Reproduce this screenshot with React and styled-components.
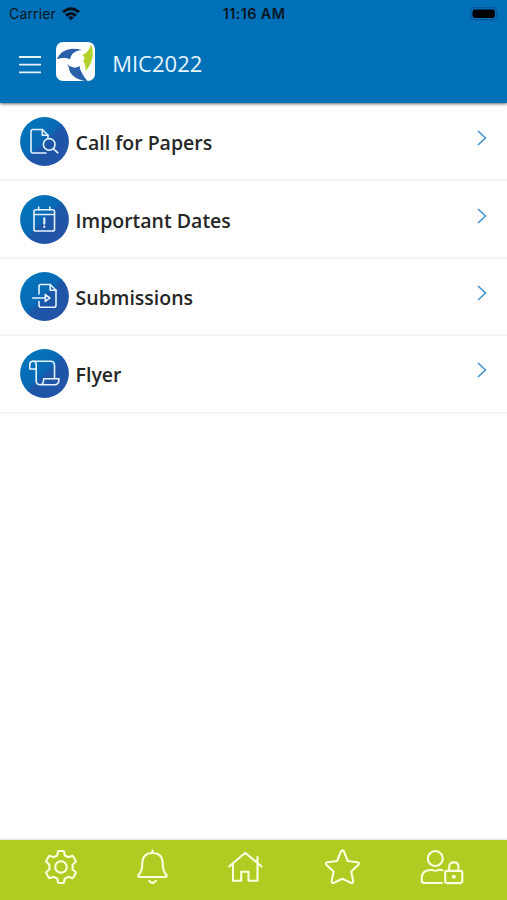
import React from 'react';
import styled, { createGlobalStyle } from 'styled-components';

const MENU = [
  { id: 'papers', label: 'Call for Papers' },
  { id: 'dates', label: 'Important Dates' },
  { id: 'submissions', label: 'Submissions' },
  { id: 'flyer', label: 'Flyer' },
];

const MENU_ICONS = {
  papers: (
    <>
      <path d="M26 36H13Q11 36 11 34V14.5Q11 12.5 13 12.5H22.3L28 18.2V20.5" />
      <path d="M22.3 12.5V18.2H28" />
      <circle cx="29.2" cy="27.4" r="5.8" />
      <path d="M33.4 31.6L37.8 35.8" />
    </>
  ),
  dates: (
    <>
      <rect x="14" y="14.8" width="20.5" height="21.2" rx="1.8" />
      <path d="M14 19.5H34.5M18.7 12V15M29.8 12V15" />
      <path d="M24.3 23.3V28.8M24.3 31.6V32" strokeWidth="2.1" />
    </>
  ),
  submissions: (
    <>
      <path d="M19 22V14.5Q19 12.5 21 12.5H30.2L36 18.3V33.2Q36 35.2 34 35.2H21Q19 35.2 19 33.2V29.5" />
      <path d="M30.2 12.5V18.3H36" />
      <path d="M12.7 26H25M25.3 22.6V29.4L29.8 26Z" />
    </>
  ),
  flyer: (
    <>
      <path d="M16.2 20H9.8V15.5Q9.8 12.2 13 12.2H30.5Q34.5 12.2 34.5 16.2V29.3" />
      <path d="M13 12.2Q16.2 12.2 16.2 16V31.5Q16.2 35.8 20.2 35.8H34.5Q39 35.8 39 29.8H23.7Q23.7 35.8 20.2 35.8" />
    </>
  ),
};

const App = () => {
  return (
    <Wrapper>
      <GlobalStyle />
      <Header>
        <StatusBar>
          <Carrier>
            Carrier
            <svg width="18" height="14" viewBox="0 0 18 14" fill="none" stroke="#04101a" strokeWidth="2.9">
              <path d="M1 5.2Q9-1.8 17 5.2" />
              <path d="M4 8.6Q9 4.2 14 8.6" />
              <path d="M9 13.2L6 10.3Q9 8.1 12 10.3Z" fill="#04101a" stroke="none" />
            </svg>
          </Carrier>
          <Time>11:16 AM</Time>
          <Battery>
            <svg width="30" height="14" viewBox="0 0 30 14">
              <rect x=".7" y=".7" width="26" height="12" rx="4" fill="none" stroke="#07559a" strokeWidth="1.2" />
              <rect x="2.5" y="2.5" width="22.5" height="8.5" rx="2.4" fill="#000" />
              <path d="M28 5Q29.5 6.7 28 8.5Z" fill="#07559a" />
            </svg>
          </Battery>
        </StatusBar>
        <TitleBar>
          <MenuBtn aria-label="Menu">
            <svg width="22" height="18" viewBox="0 0 22 18" stroke="#e5f3fb" strokeWidth="1.8">
              <path d="M0 1H22M0 8.7H22M0 16.4H22" />
            </svg>
          </MenuBtn>
          <Logo>
            <svg width="39" height="39" viewBox="18 18 117 117">
              <path d="M20 70Q34 40 66 38Q82 38 96 42Q76 45 69 52Q62 59 60 70Q44 60 20 70Z" fill="#2a5fa9" />
              <path d="M123 25Q132 48 126 70Q120 92 106 105Q109 86 99 74Q106 69 101 60Q98 58 95 57Q117 52 123 25Z" fill="#b2d12c" />
              <path d="M45 79Q57 94 75 95Q84 94 89 90Q89 100 98 115Q104 127 113 135Q86 134 69 119Q57 107 57 95Q53 86 45 79Z" fill="#2a5fa9" />
            </svg>
          </Logo>
          <Title>MIC2022</Title>
        </TitleBar>
      </Header>
      <List>
        {MENU.map((el) => (
          <Row key={el.id}>
            <svg width="49" height="49" viewBox="0 0 49 49">
              <defs>
                <linearGradient id={`bg-${el.id}`} x1="0.15" y1="0.15" x2="0.85" y2="0.85">
                  <stop offset="0" stopColor="#0074bb" />
                  <stop offset="0.46" stopColor="#0a69b5" />
                  <stop offset="0.55" stopColor="#1d56a8" />
                  <stop offset="1" stopColor="#2253a6" />
                </linearGradient>
              </defs>
              <circle cx="24.5" cy="24.5" r="24.4" fill={`url(#bg-${el.id})`} />
              <g fill="none" stroke="#e4f4ff" strokeWidth="1.6" strokeLinecap="round" strokeLinejoin="round">
                {MENU_ICONS[el.id]}
              </g>
            </svg>
            <Label>{el.label}</Label>
            <Chevron width="10" height="16" viewBox="0 0 10 16">
              <path d="M1 1L8.5 8L1 15" />
            </Chevron>
          </Row>
        ))}
      </List>
      <TabBar>
        <TabBtn aria-label="Settings">
          <TabIcon width="34" height="36" viewBox="0 0 34 36">
            <path d="M13.2 6.5L14 2.5Q14.1 2 15 2H19Q19.9 2 20 2.5L20.8 6.5Q22.5 7.1 24 8.2L28 6.9Q28.7 6.7 29.1 7.3L31.7 11.8Q32 12.5 31.5 13L28.5 15.7Q28.9 18 28.5 20.3L31.5 23Q32 23.5 31.7 24.2L29.1 28.7Q28.7 29.3 28 29.1L24 27.8Q22.5 28.9 20.8 29.5L20 33.5Q19.9 34 19 34H15Q14.1 34 14 33.5L13.2 29.5Q11.5 28.9 10 27.8L6 29.1Q5.3 29.3 4.9 28.7L2.3 24.2Q2 23.5 2.5 23L5.5 20.3Q5.1 18 5.5 15.7L2.5 13Q2 12.5 2.3 11.8L4.9 7.3Q5.3 6.7 6 6.9L10 8.2Q11.5 7.1 13.2 6.5Z" />
            <circle cx="17" cy="18" r="5.8" />
          </TabIcon>
        </TabBtn>
        <TabBtn aria-label="Notifications">
          <TabIcon width="32" height="36" viewBox="0 0 32 36">
            <path d="M15.5 1.5V4M15.5 4Q5.3 4 5.3 15Q5.3 22 1.8 25.5Q.5 28 2.3 28H28.7Q30.5 28 29.2 25.5Q25.7 22 25.7 15Q25.7 4 15.5 4Z" />
            <path d="M12.2 31.8Q15.5 36 18.8 31.8" />
          </TabIcon>
        </TabBtn>
        <TabBtn aria-label="Home">
          <TabIcon width="36" height="36" viewBox="0 0 36 36">
            <path d="M1.2 17.5L17.2 3.8L33.5 17.5M29.5 14V8M5 14.8V31.7H13.2V22.7H20.5V31.7H29.5V14.8" />
          </TabIcon>
        </TabBtn>
        <TabBtn aria-label="Favourites">
          <TabIcon width="38" height="36" viewBox="0 0 38 36">
            <path d="M17.9 2.4Q19.4 .2 20.9 2.4L24.7 12L34.5 13.2Q37 14 35.3 15.9L28.2 22.6L30.2 32.2Q30.3 34.7 27.7 33.8L19.4 29.7L11.1 33.8Q8.5 34.7 8.6 32.2L10.6 22.6L3.5 15.9Q1.8 14 4.3 13.2L14.1 12Z" />
          </TabIcon>
        </TabBtn>
        <TabBtn aria-label="Account">
          <TabIcon width="44" height="36" viewBox="0 0 44 36">
            <circle cx="15.3" cy="9.5" r="7.5" />
            <path d="M22.5 21.3Q20 20.6 18 21.1Q15.3 22.3 12.6 21.1Q1.7 19.8 1.7 30.2V31.5Q1.7 34 4.2 34H22" />
            <rect x="25.2" y="21.9" width="17.1" height="12.2" rx="2" />
            <path d="M29.2 21.7V17.7Q29.2 13.4 33.8 13.4Q38.4 13.4 38.4 17.7V21.7" />
            <circle cx="33.8" cy="27.8" r="1" fill="#fbffe0" />
          </TabIcon>
        </TabBtn>
      </TabBar>
    </Wrapper>
  );
};

const GlobalStyle = createGlobalStyle`
  * {
    box-sizing: border-box;
  }
  body {
    margin: 0;
    background-color: #fff;
  }
  svg {
    display: block;
    flex-shrink: 0;
  }
`;

const Wrapper = styled.div`
  height: 900px;
  display: flex;
  flex-direction: column;
  background-color: #fff;
  font-family: 'Open Sans', 'Noto Sans', sans-serif;
`;

const Header = styled.header`
  height: 103px;
  background-color: #0071b9;
  box-shadow: 0 1px 3px rgba(0, 0, 0, 0.6);
`;

const StatusBar = styled.div`
  height: 27px;
  padding: 0 7px 0 9px;
  display: grid;
  grid-template-columns: 1fr auto 1fr;
  align-items: center;
  font-family: Inter, 'Liberation Sans', sans-serif;
  font-size: 14px;
  color: #071521;
`;

const Carrier = styled.div`
  display: flex;
  align-items: center;
  gap: 6px;
  letter-spacing: 0.15px;
`;

const Time = styled.div`
  margin-right: 1px;
  font-size: 14.4px;
  font-weight: 600;
  letter-spacing: 0.4px;
`;

const Battery = styled.div`
  display: flex;
  justify-content: flex-end;
`;

const TitleBar = styled.div`
  height: 69px;
  padding-left: 19px;
  display: flex;
  align-items: center;
`;

const MenuBtn = styled.button`
  margin-top: 6px;
  padding: 0;
  border: none;
  background: none;
  cursor: pointer;
`;

const Logo = styled.div`
  width: 39px;
  height: 39px;
  margin-left: 15px;
  border-radius: 7px;
  background-color: #fff;
  overflow: hidden;
`;

const Title = styled.h1`
  margin: 3px 0 0 17.2px;
  font-size: 22px;
  font-weight: 400;
  line-height: 30px;
  color: #e9f5fc;
`;

const List = styled.ul`
  flex: 1;
  margin: 0;
  padding: 1px 0 0;
  list-style: none;
`;

const Row = styled.li`
  height: 77.4px;
  padding: 0 20px 0 20.4px;
  display: flex;
  align-items: center;
  border-bottom: 2px solid #f5f5f5;
`;

const Label = styled.span`
  flex: 1;
  margin: 3px 0 0 6.2px;
  font-size: 19.5px;
  font-weight: 600;
  line-height: 26px;
  color: #262626;
`;

const Chevron = styled.svg`
  margin-bottom: 7px;
  fill: none;
  stroke: #3c91cc;
  stroke-width: 1.5;
`;

const TabBar = styled.nav`
  height: 60px;
  padding: 9px 43px 0 44px;
  display: flex;
  justify-content: space-between;
  align-items: flex-start;
  background-color: #b0cb22;
  box-shadow: 0 -1px 2px rgba(0, 0, 0, 0.14);
`;

const TabBtn = styled.button`
  padding: 0;
  border: none;
  background: none;
  cursor: pointer;
`;

const TabIcon = styled.svg`
  fill: none;
  stroke: #fbffe0;
  stroke-width: 2.1;
  stroke-linecap: round;
  stroke-linejoin: round;
`;

export default App;
